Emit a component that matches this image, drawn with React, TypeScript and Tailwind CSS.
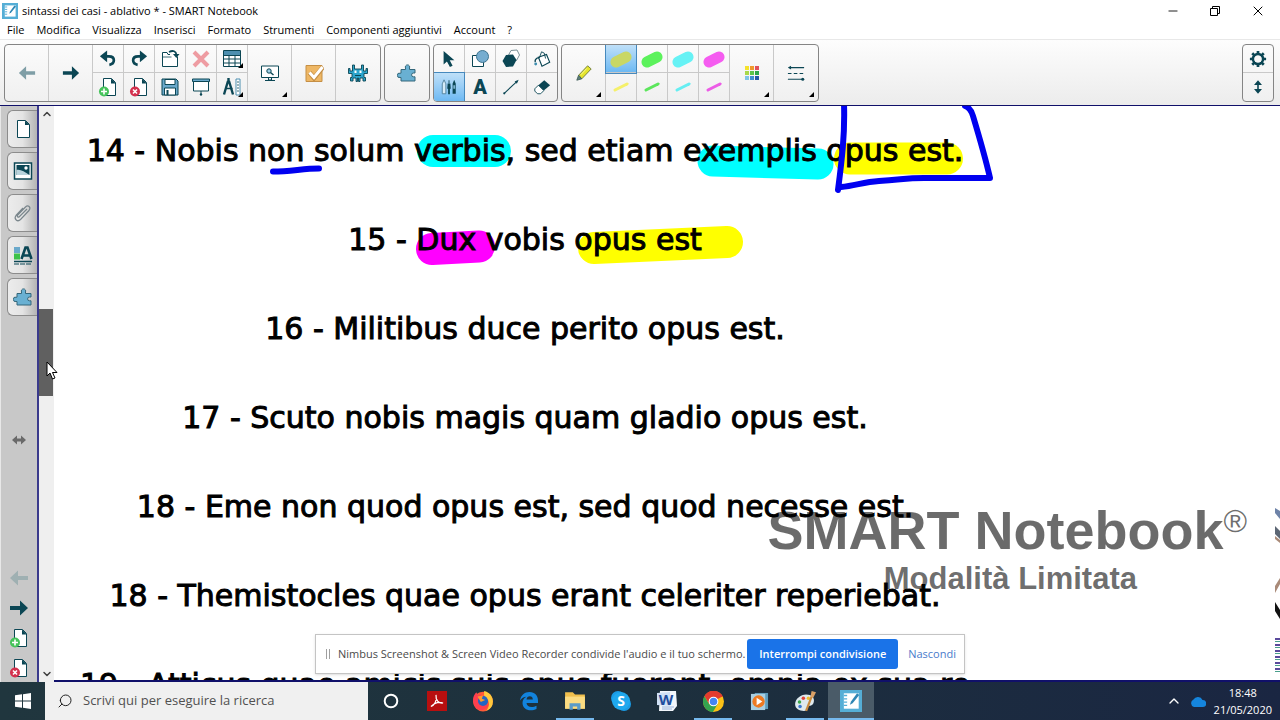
import type { ReactNode } from 'react'
import { ChevronDown, ChevronUp, Minus, Search, X } from 'lucide-react'
import { clsx } from 'clsx'

const INK = '#0b4654'

const menuItems = [
  'File',
  'Modifica',
  'Visualizza',
  'Inserisci',
  'Formato',
  'Strumenti',
  'Componenti aggiuntivi',
  'Account',
  '?',
]

const sentences = [
  '14 - Nobis non solum verbis, sed etiam exemplis opus est.',
  '15 - Dux vobis opus est',
  '16 - Militibus duce perito opus est.',
  '17 - Scuto nobis magis quam gladio opus est.',
  '18 - Eme non quod opus est, sed quod necesse est.',
  '18 - Themistocles quae opus erant celeriter reperiebat.',
  '19 - Atticus quae amicis suis opus fuerant, omnia ex sua re',
]

const penColors = [
  { name: 'Giallo', color: '#c9d765', thin: '#f5f06a' },
  { name: 'Verde', color: '#5cf25c', thin: '#5ce65c' },
  { name: 'Ciano', color: '#66f2f5', thin: '#66eef2' },
  { name: 'Magenta', color: '#f55cf0', thin: '#ec5ce6' },
]

const paletteColors = [
  '#f5e22c', '#f09a2c', '#e0525c',
  '#a8d94a', '#5cc44a', '#2ba84a',
  '#7fc4e8', '#3f8fd0', '#2459a8',
]

/* ---------- icons ---------- */

function Svg({ size = 20, children }: { size?: number; children: ReactNode }) {
  return (
    <svg width={size} height={size} viewBox="0 0 20 20" fill="none" aria-hidden className="shrink-0">
      {children}
    </svg>
  )
}

function ArrowIcon({ left = false, color = INK, size = 20 }: { left?: boolean; color?: string; size?: number }) {
  return (
    <Svg size={size}>
      <path
        d={left ? 'M1 10 9 2.500V8h10v4H9v5.500z' : 'M19 10 11 2.500V8H1v4h10v5.500z'}
        fill={color}
      />
    </Svg>
  )
}

function UndoIcon({ flip = false }: { flip?: boolean }) {
  return (
    <Svg size={18}>
      <g transform={flip ? 'translate(20 0) scale(-1 1)' : undefined}>
        <path d="M5 7h6c4 0 5.500 2 5.500 4.500S14.500 16 11.500 16.500" stroke={INK} strokeWidth="3" />
        <path d="M1 7 9 .5v13z" fill={INK} />
      </g>
    </Svg>
  )
}

function OpenIcon() {
  return (
    <Svg>
      <path d="M10 5.500H8L7 3.500H2.500v14h15v-10" fill="#fff" stroke={INK} />
      <path d="M2.500 8h9" stroke={INK} strokeWidth=".8" />
      <path d="M9 3c4-2 7-1 7.500 3" stroke={INK} strokeWidth="1.800" />
      <path d="M13 5h6.500L16.300 9z" fill={INK} />
    </Svg>
  )
}

function DeleteIcon() {
  return (
    <Svg>
      <path d="m3 3 14 14M17 3 3 17" stroke="#ee9ca2" strokeWidth="4" />
    </Svg>
  )
}

function TableIcon() {
  return (
    <Svg>
      <path d="M1.500 1.500h17v16h-17z" fill="#fff" stroke={INK} />
      <path d="M2 2h16v4.500H2z" fill="#4d8fb0" />
      <path d="M1.500 6.500h17M1.500 10h17M1.500 14h17M7 6.500v11M13 6.500v11" stroke={INK} />
    </Svg>
  )
}

function PageBadgeIcon({ remove = false }: { remove?: boolean }) {
  return (
    <Svg>
      <path d="M5.500 1.500h8l4 4v13h-12z" fill="#fff" stroke={INK} />
      <path d="M13 1.500v5h5z" fill={INK} />
      <circle cx="6" cy="14.500" r="5" fill={remove ? '#d3304d' : '#45c35a'} />
      <path
        d={remove ? 'm4 12.500 4 4m0-4-4 4' : 'M6 11.500v6m-3-3h6'}
        stroke="#fff"
        strokeWidth="1.600"
      />
    </Svg>
  )
}

function SaveIcon() {
  return (
    <Svg>
      <path d="M2 2h14l2 2v14H2z" fill="#6ba9cb" stroke={INK} />
      <path d="M5 2.500h10v5H5z" fill="#fff" stroke={INK} />
      <path d="M4.500 11h11v7h-11z" fill="#fff" stroke={INK} />
      <path d="M6.500 13h2v5h-2z" fill={INK} />
    </Svg>
  )
}

function ScreenShadeIcon() {
  return (
    <Svg>
      <path d="M1.500 2h17v2.500h-17z" fill="#6ba9cb" stroke={INK} />
      <path d="M2.500 4.500h15v9.500h-15z" fill="#fff" stroke={INK} />
      <path d="M10 14v3" stroke={INK} />
      <circle cx="10" cy="17.500" r="1.200" fill={INK} />
    </Svg>
  )
}

function MeasureIcon() {
  return (
    <Svg>
      <path d="M6.500 1v3M6 4 2 17.500M7 4l4 13.500" stroke={INK} strokeWidth="2.400" />
      <path d="M3.500 11.500h7" stroke={INK} strokeWidth="1.500" />
      <path d="M14 2h4v16h-4z" fill="#fff" stroke="#4d8fb0" />
      <path d="M15 5h2m-2 3h2m-2 3h2m-2 3h2" stroke={INK} strokeWidth=".8" />
    </Svg>
  )
}

function MonitorIcon() {
  return (
    <Svg>
      <path d="M1.500 3h17v11.500h-17z" fill="#fff" stroke={INK} />
      <path d="M8.500 14.500h3V17h-3zM5 17.500h10" stroke={INK} />
      <circle cx="9" cy="8" r="2.200" fill="#9fd0e6" stroke={INK} />
      <path d="m10.500 9.500 3 2.500" stroke={INK} strokeWidth="1.500" />
    </Svg>
  )
}

function CheckIcon() {
  return (
    <Svg>
      <path d="M2 2.500h16v16H2z" fill="#eeb765" stroke="#c58f45" />
      <path d="m5.500 9.500 4.500 5.500 9-11" stroke="#c58f45" strokeWidth="4.600" />
      <path d="m5.500 9.500 4.500 5 8.500-10.500" stroke="#fff" strokeWidth="3" />
    </Svg>
  )
}

function MonsterIcon() {
  return (
    <Svg>
      <path
        d="M4.500 2h2v4h7V2h2v6H18V5.500h1.500v5H16v4h1.500V18H15v-3h-3v3.500h-1.500V15h-1v3.500H8V15H5v3H2.500v-3.500H4v-4H.5v-5H2V8h2.500z"
        fill="#2da5cc"
        stroke={INK}
        strokeWidth=".9"
      />
      <path d="M6.500 7.500h2V10h-2zm5 0h2V10h-2z" fill="#fff" />
      <path d="M7 12.500h6" stroke={INK} />
    </Svg>
  )
}

function PuzzleIcon() {
  return (
    <Svg>
      <path
        d="M4 6.500h4.500V5a2.200 2.200 0 1 1 4 0v1.500H18v3.500h-1.500a1.900 1.900 0 1 0 0 3.800H18v4.200H4v-3.500H3a2.200 2.200 0 1 1 0-4.300h1z"
        fill="#69b0d2"
        stroke="#34677a"
      />
    </Svg>
  )
}

function PointerIcon() {
  return (
    <Svg size={18}>
      <path d="M4 1v15l3.700-3.300L11 19l3-1.500-3.200-6H16z" fill={INK} />
    </Svg>
  )
}

function ShapesIcon() {
  return (
    <Svg>
      <path d="M2.500 6.500h11v11h-11z" fill="#fff" stroke={INK} />
      <circle cx="12.500" cy="7.500" r="6" fill="#76add0" stroke="#3f7590" />
    </Svg>
  )
}

function PolygonIcon() {
  return (
    <Svg>
      <path d="m10 1.500 6-.5 2.500 5-3 5.500-6 .5-2.500-5z" fill="#fff" stroke="#7a8f96" />
      <path d="m5 6 7-.5 3.500 5.500-3.500 6.500-7 .5-3.500-6z" fill={INK} />
    </Svg>
  )
}

function FillIcon() {
  return (
    <Svg size={18}>
      <path d="m6 8 9-3 3.500 8.500L10 18z" fill="#fff" stroke={INK} strokeWidth="1.300" />
      <path d="m7 9 2.500-7 3 1.500 1.500 6" stroke={INK} />
      <path d="M6.500 8.500C2.500 9 2 12 2.500 13.500" stroke={INK} strokeWidth="1.500" />
      <circle cx="3" cy="15.500" r="1.600" fill="#3f8fb0" />
    </Svg>
  )
}

function PensIcon() {
  return (
    <Svg size={18}>
      <path d="M2.500 6.500 4.500 2l2 4.500v11h-4z" fill="#d6ebf7" stroke="#4f7f98" />
      <path d="M10 2.500V6" stroke={INK} />
      <path d="M8.500 6h3l.5 6h-4zM9 12h2v6H9z" fill={INK} />
      <path d="M14 6.500 15.800 2l1.700 4.500v11H14z" fill={INK} />
      <path d="M14.800 8h2v4h-2z" fill="#7fb4cf" />
    </Svg>
  )
}

function TextIcon() {
  return <span className="font-['Roboto',sans-serif] text-[20px] font-black leading-none text-[#0b4654]">A</span>
}

function LineIcon() {
  return (
    <Svg size={18}>
      <path d="M2.500 17 17 3.500" stroke={INK} strokeWidth="1.200" />
      <circle cx="2.500" cy="17" r="1.200" fill={INK} />
      <path d="m18.500 2-2 4.500L14 4z" fill={INK} />
    </Svg>
  )
}

function EraserIcon() {
  return (
    <Svg size={18}>
      <path d="m2 12 4-4 6 6-3.500 3.500H5L2 14.500z" fill="#fff" stroke={INK} />
      <path d="m6 8 6.500-5.500L19 8l-7 6z" fill={INK} />
    </Svg>
  )
}

function HighlighterIcon() {
  return (
    <Svg size={18}>
      <path d="M4 12.500 14 2l4 3.500L7.500 16.500z" fill="#e6e52c" stroke="#6d7a3a" />
      <path d="M4 12.500 2 18l5.500-1.500z" fill="#5c7f78" stroke="#44605c" />
      <path d="M13 5 6.500 12" stroke="#fbfaa0" />
    </Svg>
  )
}

function LineStyleIcon() {
  return (
    <Svg size={18}>
      <path d="M2 4h17" stroke={INK} strokeWidth="1.200" />
      <path d="M1 4 4.500 2v4z" fill={INK} />
      <path d="M1 10.500h18" stroke={INK} strokeWidth="1.200" strokeDasharray="4 2.500" />
      <path d="M1 17h16" stroke={INK} strokeWidth="1.200" />
      <circle cx="17.500" cy="17" r="1.700" fill={INK} />
    </Svg>
  )
}

function GearIcon() {
  return (
    <Svg size={18}>
      <circle cx="10" cy="10" r="5.500" stroke={INK} strokeWidth="3" />
      <g stroke={INK} strokeWidth="3">
        <path d="M10 1v4M10 15v4M1 10h4M15 10h4M3.600 3.600l2.900 2.900M13.500 13.500l2.900 2.900M16.400 3.600l-2.900 2.900M6.500 13.500l-2.900 2.900" />
      </g>
      <circle cx="10" cy="10" r="4" fill="#f7f7f7" />
    </Svg>
  )
}

function MoveVerticalIcon() {
  return (
    <Svg size={16}>
      <path d="M10 5v10" stroke={INK} strokeWidth="2" />
      <path d="m10 1.500 5 6H5zM10 18.500l5-6H5z" fill={INK} />
    </Svg>
  )
}

function NotebookIcon({ size = 16 }: { size?: number }) {
  return (
    <Svg size={size}>
      <path d="M0 0h20v20H0z" fill="#55aed6" />
      <path d="M3.500 3h13.500v14H3.500z" fill="#fff" />
      <path d="M3.500 5h3m-3 3h3m-3 3h3m-3 3h3" stroke="#55aed6" strokeWidth="1.200" />
      <path d="m9 13.500 1-3L15.500 3l2 1.500-6 7.500z" fill="#2f86b4" />
    </Svg>
  )
}

/* ---------- toolbar ---------- */

type ToolProps = {
  label: string
  children: ReactNode
  tall?: boolean
  menu?: boolean
  active?: boolean
}

function Tool({ label, children, tall, menu, active }: ToolProps) {
  return (
    <button
      type="button"
      aria-label={label}
      className={clsx(
        'relative flex items-center justify-center',
        tall ? 'h-full w-11' : 'h-7 w-[30px]',
        active && 'bg-gradient-to-b from-[#bfe0f8] to-[#6db9f3] ring-1 ring-[#4689bd]'
      )}
    >
      {children}
      {menu && (
        <svg width="5" height="5" viewBox="0 0 5 5" aria-hidden className="absolute bottom-1 right-1">
          <path d="M5 0v5H0z" fill="#000" />
        </svg>
      )}
    </button>
  )
}

function Pair({ children }: { children: ReactNode }) {
  return <div className="flex flex-col divide-y divide-[#c9c9c9]">{children}</div>
}

function Group({ children }: { children: ReactNode }) {
  return (
    <div className="flex h-[58px] divide-x divide-[#c9c9c9] overflow-hidden rounded border border-[#858585] bg-gradient-to-b from-[#fbfbfb] to-[#f0f0f0]">
      {children}
    </div>
  )
}

function Toolbar() {
  return (
    <div className="flex shrink-0 items-center gap-[3px] border-b border-t border-b-[#10106a] border-t-[#e8e8e8] bg-gradient-to-b from-[#fdfdfd] to-[#ececec] pb-[3px] pl-1 pr-1.5 pt-1">
      <Group>
        <Tool label="Pagina precedente" tall><ArrowIcon left color="#7f9ea6" size={18} /></Tool>
        <Tool label="Pagina successiva" tall><ArrowIcon size={18} /></Tool>
        <Pair>
          <Tool label="Annulla"><UndoIcon /></Tool>
          <Tool label="Aggiungi pagina"><PageBadgeIcon /></Tool>
        </Pair>
        <Pair>
          <Tool label="Ripeti"><UndoIcon flip /></Tool>
          <Tool label="Elimina pagina"><PageBadgeIcon remove /></Tool>
        </Pair>
        <Pair>
          <Tool label="Apri"><OpenIcon /></Tool>
          <Tool label="Salva"><SaveIcon /></Tool>
        </Pair>
        <Pair>
          <Tool label="Elimina"><DeleteIcon /></Tool>
          <Tool label="Tendina"><ScreenShadeIcon /></Tool>
        </Pair>
        <Pair>
          <Tool label="Tabella" menu><TableIcon /></Tool>
          <Tool label="Misura" menu><MeasureIcon /></Tool>
        </Pair>
        <Tool label="Visualizza schermo" tall menu><MonitorIcon /></Tool>
        <Tool label="Valutazione" tall><CheckIcon /></Tool>
        <Tool label="Attività" tall><MonsterIcon /></Tool>
      </Group>
      <Group>
        <Tool label="Componenti" tall><PuzzleIcon /></Tool>
      </Group>
      <Group>
        <Pair>
          <Tool label="Seleziona"><PointerIcon /></Tool>
          <Tool label="Penne" active><PensIcon /></Tool>
        </Pair>
        <Pair>
          <Tool label="Forme"><ShapesIcon /></Tool>
          <Tool label="Testo"><TextIcon /></Tool>
        </Pair>
        <Pair>
          <Tool label="Poligoni"><PolygonIcon /></Tool>
          <Tool label="Linee"><LineIcon /></Tool>
        </Pair>
        <Pair>
          <Tool label="Riempi"><FillIcon /></Tool>
          <Tool label="Gomma"><EraserIcon /></Tool>
        </Pair>
      </Group>
      <Group>
        <Tool label="Evidenziatore" tall menu><HighlighterIcon /></Tool>
        {penColors.map(({ name, color, thin }, i) => (
          <Pair key={name}>
            <Tool label={`${name} spesso`} active={i === 0}>
              <svg width="24" height="20" viewBox="0 0 24 20" aria-hidden>
                <path d="m7 13 10-5" stroke={color} strokeWidth="11" strokeLinecap="round" />
              </svg>
            </Tool>
            <Tool label={`${name} sottile`}>
              <svg width="24" height="20" viewBox="0 0 24 20" aria-hidden>
                <path d="m6 13 12-6" stroke={thin} strokeWidth="3" strokeLinecap="round" />
              </svg>
            </Tool>
          </Pair>
        ))}
        <Tool label="Colori" tall menu>
          <svg width="14" height="14" viewBox="0 0 14 14" aria-hidden>
            {paletteColors.map((color, i) => (
              <rect key={color} x={(i % 3) * 5} y={Math.floor(i / 3) * 5} width="4" height="4" fill={color} />
            ))}
          </svg>
        </Tool>
        <Tool label="Stile linea" tall menu><LineStyleIcon /></Tool>
      </Group>
      <div className="ml-auto">
        <Group>
          <Pair>
            <Tool label="Impostazioni"><GearIcon /></Tool>
            <Tool label="Sposta barra"><MoveVerticalIcon /></Tool>
          </Pair>
        </Group>
      </div>
    </div>
  )
}

/* ---------- sidebar ---------- */

const sideTabs = [
  {
    label: 'Pagine',
    icon: (
      <Svg>
        <path d="M4.500 1.500h8l4 4v13h-12z" fill="#fff" stroke={INK} />
        <path d="M12 1.500V6h4.500z" fill={INK} />
      </Svg>
    ),
  },
  {
    label: 'Galleria',
    icon: (
      <Svg>
        <path d="M1.500 2h17v16h-17z" fill="#fff" stroke={INK} strokeWidth="1.500" />
        <path d="M3.500 4h13v10h-13z" fill={INK} />
        <path d="M3.500 9c4-1 8 2 13 5h-13z" fill="#b9d3dc" />
        <circle cx="13" cy="7" r="1.700" fill="#fff" />
      </Svg>
    ),
  },
  {
    label: 'Allegati',
    icon: (
      <Svg>
        <path
          d="m14 6-7.500 7.500c-1.500 1.500-3-.2-1.800-1.500L12.500 4c2.500-2.500 6 0 3.500 3.500l-8.500 9c-3 3-7-.5-4.500-4L10 5"
          stroke="#7a868c"
          strokeWidth="1.200"
        />
      </Svg>
    ),
  },
  {
    label: 'Proprietà',
    icon: (
      <Svg>
        <path d="M1 2h6v6H1z" fill="#6ba9cb" />
        <path d="M1 8.500h6v6H1z" fill="#3cc24a" />
        <path d="m8.500 14 4-11.500h2L18.500 14M10 10.500h7" stroke={INK} strokeWidth="2.600" />
        <path d="M1 16.500h18" stroke={INK} strokeWidth="1.500" />
        <path d="M1 19h18" stroke={INK} strokeDasharray="5 1" />
      </Svg>
    ),
  },
  { label: 'Componenti', icon: <PuzzleIcon /> },
]

function Sidebar() {
  return (
    <aside className="flex w-[39px] shrink-0 flex-col border-l border-r-2 border-l-[#e8e8e8] border-r-[#3a3a8c] bg-[#c8c8c8] pb-1">
      <nav aria-label="Schede" className="flex flex-col gap-1 pl-1.5 pt-1">
        {sideTabs.map(({ label, icon }) => (
          <button
            key={label}
            type="button"
            aria-label={label}
            className="flex h-[38px] items-center justify-center rounded-l-md border border-r-0 border-[#8c8c8c] bg-gradient-to-r from-[#ececec] via-[#e4e4e4] to-[#b4b4b4]"
          >
            {icon}
          </button>
        ))}
      </nav>
      <div className="mt-auto flex flex-col items-center">
        <button type="button" aria-label="Ridimensiona" className="mb-[123px]">
          <svg width="14" height="10" viewBox="0 0 14 10" aria-hidden>
            <path d="M0 5 5 .5v3h4v-3L14 5 9 9.500v-3H5v3z" fill="#6a6a6a" />
          </svg>
        </button>
        <div className="flex flex-col items-center gap-2.5">
          <button type="button" aria-label="Indietro"><ArrowIcon left color="#9fb0b2" /></button>
          <button type="button" aria-label="Avanti"><ArrowIcon /></button>
          <button type="button" aria-label="Nuova pagina"><PageBadgeIcon /></button>
          <button type="button" aria-label="Rimuovi pagina"><PageBadgeIcon remove /></button>
        </div>
      </div>
    </aside>
  )
}

function Scrollbar() {
  return (
    <div className="flex w-[15px] shrink-0 flex-col items-center bg-[#efefef]">
      <button type="button" aria-label="Scorri su" className="pt-0.5">
        <ChevronUp className="h-3 w-3 text-[#404040]" strokeWidth={3} aria-hidden />
      </button>
      <div className="flex w-full flex-1 flex-col pr-px">
        <div className="flex-[188]" />
        <div className="flex-[86] bg-[#606060]" />
        <div className="flex-[270]" />
      </div>
      <button type="button" aria-label="Scorri giù" className="pb-0.5">
        <ChevronDown className="h-3 w-3 text-[#404040]" strokeWidth={3} aria-hidden />
      </button>
    </div>
  )
}

/* ---------- page ---------- */

function Page() {
  return (
    <main className="relative min-w-0 flex-1 overflow-hidden border-b-2 border-[#10106a] bg-white">
      <svg width="1226" height="576" viewBox="54 106 1226 576" fill="none" aria-hidden className="absolute left-0 top-0">
        <g strokeLinecap="round">
          <path d="M433 151h62" stroke="#0ff" strokeWidth="32" />
          <path d="m713 161 105 3" stroke="#0ff" strokeWidth="31" />
          <path d="M850 158.500h97" stroke="#ff0" strokeWidth="32" />
          <path d="m432 249 47-2.500" stroke="#f0f" strokeWidth="32" />
          <path d="m594 248 133-6" stroke="#ff0" strokeWidth="32" />
        </g>
      </svg>

      <div className="relative w-[942px] pb-4 text-center font-['Comic_Sans_MS','DejaVu_Sans',sans-serif] text-[30px] leading-[89px] text-black [-webkit-text-stroke:1px_black]">
        {sentences.map((line) => (
          <p key={line} className="whitespace-nowrap">{line}</p>
        ))}
      </div>

      <svg width="1226" height="576" viewBox="54 106 1226 576" fill="none" aria-hidden className="absolute left-0 top-0">
        <g stroke="#0000f0" strokeWidth="6" strokeLinecap="round" strokeLinejoin="round">
          <path d="M273 171.500c18 0 30-3 46-3" />
          <path d="M844 104c1 30-2 55-6 86M841 187c14-1 22-5 38-6 22-1 25-3 45-3h66c-5-22-11-42-17-62-2-7-5-9-8-10" />
        </g>
      </svg>

      <div className="absolute bottom-[83px] right-[33px] flex flex-col items-end font-['Liberation_Sans',sans-serif] font-bold text-black/58">
        <div className="flex items-start text-[54px] leading-[54px]">
          SMART Notebook
          <span className="text-[32px] font-normal leading-9">®</span>
        </div>
        <div className="mt-1 pr-[110px] text-[31px] leading-9">Modalità Limitata</div>
      </div>

      <svg width="5" height="174" viewBox="0 0 5 174" aria-hidden className="absolute bottom-0 right-0">
        <path d="M0 2 5 5v8L0 7z" fill="#6e83a8" />
        <path d="m0 20 5 5v8l-5-5z" fill="#5c6674" />
        <path d="m0 30 5 4v3l-5-4zM0 64l5 4M0 80l5-8v6l-5 9z" fill="#a98a78" />
        <path d="m0 96 5 8v9l-5-8z" fill="#111" />
        {[132, 138, 144, 150, 156, 162].map((y) => (
          <g key={y}>
            <path d={`M0 ${y}h5v2H0z`} fill="#5a4a9c" />
            <path d={`M0 ${y + 3}h5v1H0z`} fill="#4aa08c" />
          </g>
        ))}
      </svg>
    </main>
  )
}

function ShareBar() {
  return (
    <div className="absolute bottom-[46px] left-1/2 flex h-10 w-[650px] -translate-x-1/2 items-center border border-[#c4c4c4] bg-white pl-2.5 pr-2 text-[11px] shadow">
      <span className="flex h-2.5 w-1 shrink-0 justify-between" aria-hidden>
        <span className="w-px bg-[#a0a0a0]" />
        <span className="w-px bg-[#a0a0a0]" />
      </span>
      <span className="ml-2 whitespace-nowrap text-[#4a4a4a]">
        Nimbus Screenshot &amp; Screen Video Recorder condivide l'audio e il tuo schermo.
      </span>
      <button type="button" className="ml-auto h-[30px] w-[151px] shrink-0 whitespace-nowrap rounded-[3px] bg-[#1a73e8] font-semibold text-white">
        Interrompi condivisione
      </button>
      <a href="#nascondi" className="ml-2.5 text-[#4a7bcb]">Nascondi</a>
    </div>
  )
}

/* ---------- taskbar ---------- */

const apps = [
  {
    name: 'Cortana',
    icon: (
      <Svg size={18}>
        <circle cx="10" cy="10" r="7" stroke="#fff" strokeWidth="2.200" />
      </Svg>
    ),
  },
  {
    name: 'Adobe Reader',
    icon: (
      <Svg>
        <path d="M0 0h20v20H0z" fill="#b80f0f" />
        <path d="M4 15.500c3-1 6.500-6 5-11.500-.5 5 2.500 8.500 7 8-4-1.500-8.500 0-12 3.500z" stroke="#fff" strokeWidth="1.200" />
      </Svg>
    ),
  },
  {
    name: 'Firefox',
    icon: (
      <Svg size={22}>
        <circle cx="10" cy="10.500" r="9" fill="#ff5a36" />
        <path d="M11 1c5 1 8 5 8 9.500a9 9 0 0 1-6 8.500c4-5 3-10-2-14z" fill="#ffc93c" />
        <path d="M1 9c0-3 1-5 3-7l1 2.500L9 4 6 9c1 5 5 6 9 4-1 4-5 6-8.500 5C3 17 1 13 1 9z" fill="#ff3f4f" />
        <circle cx="10" cy="10" r="4.600" fill="#2365c4" />
        <path d="m5 6 5-1-1 3 3 1-4 2z" fill="#ff9a2c" />
      </Svg>
    ),
  },
  {
    name: 'Edge',
    icon: (
      <Svg>
        <path
          d="M1 9.500C2 4 5.500 1 10.500 1 16 1 19 5 19 9.500v2.500H7.500c.2 2.500 2.500 4 5 4 2 0 3.500-.5 5-1.300V18c-1.700.8-3.500 1.300-5.800 1.300C7 19.300 3.500 16.500 3.500 12c0-2.700 1.500-5 4-6.200C4.800 6 2.500 7.300 1 9.500zm6.500-1h6.300c0-2-1.200-3.200-3-3.200S7.800 6.500 7.500 8.500z"
          fill="#1283dd"
        />
      </Svg>
    ),
  },
  {
    name: 'Esplora file',
    open: true,
    icon: (
      <Svg size={22}>
        <path d="M1 2h7l2 2h9v13H1z" fill="#f0bf4d" />
        <path d="M1 6h18v11H1z" fill="#fbdc82" />
        <path d="M5 18v-6h10v6h-3v-3H8v3z" fill="#5a9bc8" />
      </Svg>
    ),
  },
  {
    name: 'Skype',
    icon: (
      <svg width="22" height="22" viewBox="0 0 22 22" aria-hidden>
        <circle cx="8" cy="8" r="7" fill="#1a9ce6" />
        <circle cx="14" cy="14" r="7" fill="#1a9ce6" />
        <circle cx="11" cy="11" r="9" fill="#1fa8ee" />
        <text x="11" y="16" textAnchor="middle" fontSize="14" fontWeight="700" fill="#fff">S</text>
      </svg>
    ),
  },
  {
    name: 'Word',
    icon: (
      <svg width="22" height="22" viewBox="0 0 22 22" aria-hidden>
        <path d="M4 1h16l1 15-4 5H3z" fill="#f2f6fb" />
        <path d="M6 17h12M6 19h10" stroke="#9ab5dd" />
        <path d="M1 3 14 2v14L1 15z" fill="#cfe0f5" />
        <text x="10" y="15" textAnchor="middle" fontSize="15" fontWeight="700" fill="#1f4e9e">W</text>
      </svg>
    ),
  },
  {
    name: 'Chrome',
    open: true,
    icon: (
      <Svg size={21}>
        <circle cx="10" cy="10" r="10" fill="#fbc116" />
        <path d="M10 10 1.340 5A10 10 0 0 1 18.660 5z" fill="#e33b2e" />
        <path d="M10 5.500h9a10 10 0 0 0-17.660-.5l4.500 7.300z" fill="#e33b2e" />
        <path d="M1.340 5A10 10 0 0 0 9.500 20l4.400-7.600-8 .1z" fill="#34a350" />
        <circle cx="10" cy="10" r="4.600" fill="#fff" />
        <circle cx="10" cy="10" r="3.600" fill="#4285f4" />
      </Svg>
    ),
  },
  {
    name: 'Media Player',
    icon: (
      <Svg size={19}>
        <path d="M5 1h14v17H5z" fill="#5f9dbd" />
        <path d="M1 2h15v17H1z" fill="#a9cfe2" />
        <circle cx="9" cy="10" r="6.500" fill="#ee7a22" />
        <path d="m7 6 6 4-6 4z" fill="#fff" />
      </Svg>
    ),
  },
  {
    name: 'Paint',
    open: true,
    icon: (
      <Svg size={22}>
        <path d="M1 13c0-5 5-9 10-9s8 3 7 7-4 3-5 4 0 4-4 4-8-2-8-6z" fill="#dfe9ee" />
        <circle cx="5" cy="11" r="1.600" fill="#3aa84a" />
        <circle cx="8.500" cy="7.500" r="1.600" fill="#e0453a" />
        <circle cx="5.500" cy="15" r="1.600" fill="#3a78d0" />
        <circle cx="13" cy="7.500" r="1.500" fill="#f0c02c" />
        <path d="m11 19 5-13" stroke="#c98a3f" strokeWidth="2" />
        <path d="m15 6 1-5 4 1-2.500 5z" fill="#d9a066" />
      </Svg>
    ),
  },
  { name: 'SMART Notebook', open: true, active: true, icon: <NotebookIcon size={22} /> },
]

function Taskbar() {
  return (
    <footer className="flex h-[38px] shrink-0 bg-gradient-to-r from-[#20363e] via-[#1d303d] to-[#1a2642] text-white">
      <button type="button" aria-label="Start" className="flex w-[45px] items-center justify-center">
        <svg width="16" height="16" viewBox="0 0 16 16" fill="#fff" aria-hidden>
          <path d="m0 2.300 7-1v6.200H0zM8 1.200 16 0v7.500H8zM0 8.500h7v6.200l-7-1zM8 8.500h8V16l-8-1.200z" />
        </svg>
      </button>
      <label className="flex w-[323px] items-center gap-2.5 bg-[#f0f0f0] pl-3">
        <Search className="h-4 w-4 -scale-x-100 text-[#222]" strokeWidth={1.5} aria-hidden />
        <input
          type="text"
          aria-label="Ricerca"
          placeholder="Scrivi qui per eseguire la ricerca"
          className="min-w-0 flex-1 bg-transparent text-[13px] text-[#222] outline-none placeholder:text-[#505050]"
        />
      </label>
      {apps.map(({ name, icon, open, active }) => (
        <button
          key={name}
          type="button"
          aria-label={name}
          className={clsx('relative flex w-[46px] items-center justify-center', active && 'bg-[#4a5b68]')}
        >
          {icon}
          {open && (
            <span className={clsx('absolute bottom-0 h-0.5 bg-[#76b9ed]', active ? 'inset-x-0' : 'inset-x-1')} />
          )}
        </button>
      ))}
      <div className="ml-auto flex items-center gap-2 pr-2">
        <ChevronUp className="h-4 w-4" strokeWidth={2} aria-hidden />
        <svg width="16" height="11" viewBox="0 0 16 11" aria-hidden>
          <path d="M4 11a4 4 0 0 1-.5-7.500A5 5 0 0 1 12.500 4 3.500 3.500 0 0 1 13 11z" fill="#1585dd" />
        </svg>
        <div className="text-center text-[11px] leading-[17px]">
          <div>18:48</div>
          <div>21/05/2020</div>
        </div>
      </div>
    </footer>
  )
}

export default function App() {
  return (
    <div className="relative flex h-screen flex-col overflow-hidden bg-white font-['Segoe_UI','Open_Sans',sans-serif] text-black">
      <header className="flex h-[22px] shrink-0 items-center pl-0.5 text-[11px]">
        <NotebookIcon />
        <h1 className="ml-1">sintassi dei casi - ablativo * - SMART Notebook</h1>
        <div className="ml-auto flex items-center gap-[30px] pr-3.5">
          <button type="button" aria-label="Riduci a icona"><Minus className="h-3.5 w-3.5" strokeWidth={1.5} aria-hidden /></button>
          <button type="button" aria-label="Ripristina">
            <svg width="10" height="10" viewBox="0 0 10 10" fill="none" stroke="#000" aria-hidden>
              <path d="M.5 2.500h7v7h-7zM2.500 2.500v-2h7v7h-2" />
            </svg>
          </button>
          <button type="button" aria-label="Chiudi"><X className="h-4 w-4" strokeWidth={1.5} aria-hidden /></button>
        </div>
      </header>
      <nav aria-label="Menu" className="flex h-[17px] shrink-0 items-center gap-3 pl-[7px] text-[11px]">
        {menuItems.map((item) => (
          <button key={item} type="button" className="whitespace-nowrap">{item}</button>
        ))}
      </nav>
      <Toolbar />
      <div className="flex min-h-0 flex-1">
        <Sidebar />
        <Scrollbar />
        <Page />
      </div>
      <Taskbar />
      <ShareBar />
      <svg width="14" height="20" viewBox="0 0 14 20" aria-hidden className="absolute left-[46px] top-[361px]">
        <path d="M1 1v14l3-3 2.500 6 2.500-1-2.500-5.500H11z" fill="#fff" stroke="#000" />
      </svg>
    </div>
  )
}
